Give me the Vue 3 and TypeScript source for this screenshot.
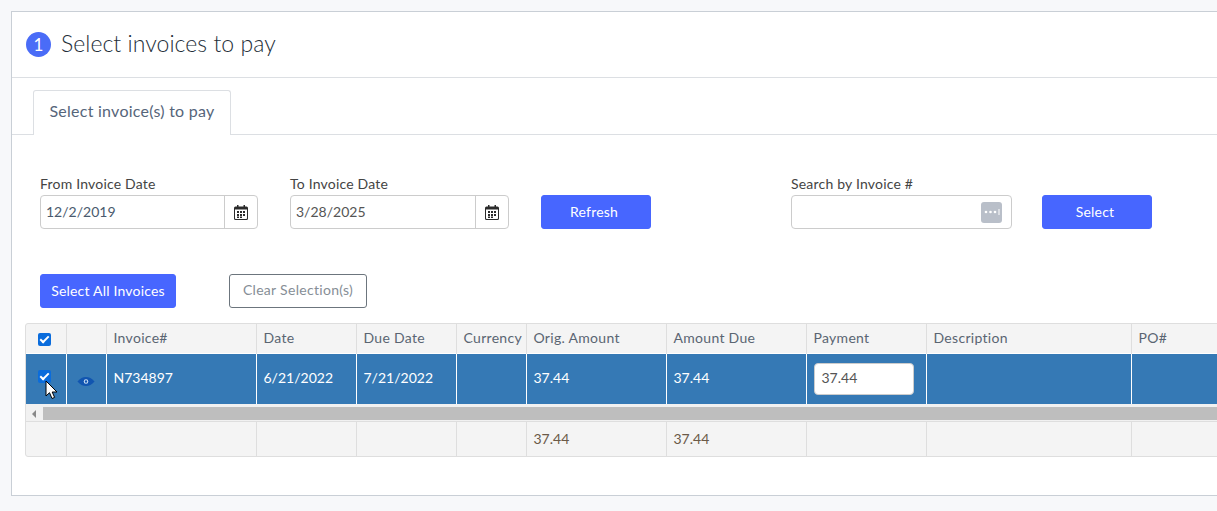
<script setup lang="ts">
const columns = [
  { title: '', width: 40 },
  { title: '', width: 40 },
  { title: 'Invoice#', width: 150 },
  { title: 'Date', width: 100 },
  { title: 'Due Date', width: 100 },
  { title: 'Currency', width: 70 },
  { title: 'Orig. Amount', width: 140 },
  { title: 'Amount Due', width: 140 },
  { title: 'Payment', width: 120 },
  { title: 'Description', width: 205 },
  { title: 'PO#', width: 160 },
]

const row = ['N734897', '6/21/2022', '7/21/2022', '', '37.44', '37.44']
const footer = ['', '', '', '', '37.44', '37.44', '', '', '']
</script>

<template>
  <div class="card">
    <div class="card-head">
      <span class="step">1</span>
      <h1>Select invoices to pay</h1>
    </div>

    <div class="tabs">
      <div class="tab">Select invoice(s) to pay</div>
    </div>

    <div class="filters">
      <div class="field from">
        <label>From Invoice Date</label>
        <div class="input-box">
          <span class="value blue">12/2/2019</span>
          <span class="cal-btn">
            <svg width="14" height="15" viewBox="0 0 14 15">
              <path fill="#2b2b2b" d="M1.5 1.5H3V0h1.5v1.5h5V0H11v1.5h1.5A1.5 1.5 0 0 1 14 3v10.5a1.5 1.5 0 0 1-1.5 1.5h-11A1.5 1.5 0 0 1 0 13.500V3a1.500 1.500 0 0 1 1.500-1.500z" />
              <path fill="#fff" d="M1 4.500h12v8.800a.7.7 0 0 1-.7.7H1.700a.7.7 0 0 1-.7-.7z" />
              <path fill="#2b2b2b" d="M3 6h2v2H3zM6 6h2v2H6zM9 6h2v2H9zM3 9h2v2H3zM6 9h2v2H6zM9 9h2v2H9zM6 11.500h2v1.500H6zM3 11.500h2v1.500H3z" />
            </svg>
          </span>
        </div>
      </div>
      <div class="field to">
        <label>To Invoice Date</label>
        <div class="input-box">
          <span class="value">3/28/2025</span>
          <span class="cal-btn">
            <svg width="14" height="15" viewBox="0 0 14 15">
              <path fill="#2b2b2b" d="M1.5 1.5H3V0h1.5v1.5h5V0H11v1.5h1.5A1.5 1.5 0 0 1 14 3v10.5a1.5 1.5 0 0 1-1.5 1.5h-11A1.5 1.5 0 0 1 0 13.500V3a1.500 1.500 0 0 1 1.500-1.500z" />
              <path fill="#fff" d="M1 4.500h12v8.800a.7.7 0 0 1-.7.7H1.700a.7.7 0 0 1-.7-.7z" />
              <path fill="#2b2b2b" d="M3 6h2v2H3zM6 6h2v2H6zM9 6h2v2H9zM3 9h2v2H3zM6 9h2v2H6zM9 9h2v2H9zM6 11.500h2v1.500H6zM3 11.500h2v1.500H3z" />
            </svg>
          </span>
        </div>
      </div>
      <button class="btn primary refresh">Refresh</button>
      <div class="field search">
        <label>Search by Invoice #</label>
        <div class="input-box">
          <span class="value"></span>
          <span class="dots">
            <svg width="16" height="6" viewBox="0 0 16 6">
              <circle cx="2" cy="3" r="1.300" fill="#fff" />
              <circle cx="6.500" cy="3" r="1.300" fill="#fff" />
              <circle cx="11" cy="3" r="1.300" fill="#fff" />
              <rect x="14.500" y="0" width="1" height="6" fill="#fff" />
            </svg>
          </span>
        </div>
      </div>
      <button class="btn primary select">Select</button>
    </div>

    <div class="actions">
      <button class="btn primary all">Select All Invoices</button>
      <button class="btn outline">Clear Selection(s)</button>
    </div>

    <div class="grid">
      <table>
        <colgroup>
          <col v-for="(c, i) in columns" :key="i" :style="{ width: c.width + 'px' }" />
        </colgroup>
        <thead>
          <tr>
            <th class="center"><span class="check"></span></th>
            <th v-for="c in columns.slice(1)" :key="c.title">{{ c.title }}</th>
          </tr>
        </thead>
        <tbody>
          <tr class="selected">
            <td class="center check-cell">
              <span class="check"></span>
              <svg class="cursor" width="13" height="20" viewBox="0 0 13 20">
                <path fill="#fff" stroke="#000" stroke-width="1" d="M1 1v15l3.500-3.300L7 18.500l2.600-1.100L7.200 12h4.800z" />
              </svg>
            </td>
            <td class="center">
              <svg class="eye" width="18" height="9" viewBox="0 0 19 10">
                <path fill="#1155b0" d="M0 5C3 1.500 6 0 9.500 0S16 1.500 19 5c-3 3.500-6 5-9.500 5S3 8.500 0 5z" />
                <circle cx="9.500" cy="5" r="2.500" fill="#cfe0f5" />
                <circle cx="9.500" cy="5" r="1.300" fill="#1155b0" />
              </svg>
            </td>
            <td v-for="(v, i) in row" :key="i">{{ v }}</td>
            <td class="pay"><span class="pay-input">37.44</span></td>
            <td></td>
            <td></td>
          </tr>
        </tbody>
      </table>
      <div class="scrollbar">
        <span class="arrow"></span>
        <div class="thumb"></div>
      </div>
      <table class="foot">
        <colgroup>
          <col v-for="(c, i) in columns" :key="i" :style="{ width: c.width + 'px' }" />
        </colgroup>
        <tbody>
          <tr>
            <td></td>
            <td></td>
            <td v-for="(v, i) in footer" :key="i">{{ v }}</td>
          </tr>
        </tbody>
      </table>
    </div>
  </div>
</template>

<style>
html,
body {
  margin: 0;
  height: 511px;
  overflow: hidden;
  background: #f7f8fa;
}
</style>

<style scoped>
.card {
  box-sizing: border-box;
  width: 1206px;
  height: 485px;
  margin: 11px 0 0 11px;
  background: #fff;
  border: 1px solid #c9cfd6;
  border-right: none;
  overflow: hidden;
  font-family: Lato, "Open Sans", sans-serif;
  font-size: 14px;
  color: #3f4a56;
}
.card-head {
  display: flex;
  align-items: center;
  height: 65px;
  padding-left: 14px;
  border-bottom: 1px solid #dcdfe3;
}
.step {
  width: 25px;
  height: 25px;
  border-radius: 50%;
  background: #4a6cf7;
  color: #fff;
  font-size: 17px;
  line-height: 25px;
  text-align: center;
}
h1 {
  margin: 0 0 4px 10px;
  font-size: 23px;
  font-weight: 300;
  letter-spacing: 0.05px;
  color: #242e38;
}
.tabs {
  height: 44px;
  margin-top: 12px;
  padding-left: 21px;
  border-bottom: 1px solid #dcdfe3;
}
.tab {
  box-sizing: border-box;
  width: 198px;
  height: 45px;
  background: #fff;
  border: 1px solid #dcdfe3;
  border-bottom: none;
  border-radius: 3px 3px 0 0;
  line-height: 39px;
  text-align: center;
  font-size: 16px;
  letter-spacing: 0.25px;
  color: #56657a;
}
.filters {
  display: flex;
  align-items: flex-end;
  height: 60px;
  margin-top: 34px;
  padding-left: 28px;
}
.field label {
  display: block;
  margin-bottom: 3px;
  line-height: 17px;
  font-size: 14px;
  letter-spacing: 0.2px;
  color: #444;
}
.from {
  width: 218px;
}
.to {
  width: 219px;
  margin-left: 32px;
}
.search {
  width: 221px;
  margin-left: 140px;
}
.input-box {
  box-sizing: border-box;
  display: flex;
  align-items: center;
  height: 34px;
  background: #fff;
  border: 1px solid #ccc;
  border-radius: 4px;
}
.value {
  flex: 1;
  padding: 0 0 2px 5px;
  color: #555;
  font-size: 14px;
}
.value.blue {
  color: #4a5a6e;
}
.cal-btn {
  display: flex;
  align-items: center;
  justify-content: center;
  width: 32px;
  height: 100%;
  border-left: 1px solid #ccc;
}
.dots {
  display: flex;
  align-items: center;
  justify-content: center;
  width: 21px;
  height: 21px;
  margin-right: 9px;
  background: #b9bfc9;
  border-radius: 3px;
}
.btn {
  box-sizing: border-box;
  height: 34px;
  border-radius: 3px;
  font-family: inherit;
  font-size: 14px;
  letter-spacing: 0.2px;
  padding: 0 0 2px;
}
.primary {
  background: #4766ff;
  border: 1px solid #4766ff;
  color: #fff;
}
.refresh {
  width: 110px;
  margin-left: 32px;
  padding-right: 4px;
}
.select {
  width: 110px;
  margin-left: 30px;
  padding-right: 4px;
}
.actions {
  display: flex;
  margin-top: 45px;
  padding-left: 28px;
}
.all {
  width: 136px;
}
.outline {
  width: 138px;
  margin-left: 53px;
  padding-bottom: 3px;
  background: #fff;
  border: 1px solid #6c757d;
  color: #868e96;
  letter-spacing: 0.3px;
}
.grid {
  width: 1300px;
  height: 134px;
  margin: 15px 0 0 13px;
  box-sizing: border-box;
  background: #f4f4f4;
  border: 1px solid #dedede;
  border-radius: 3px;
  overflow: hidden;
}
table {
  table-layout: fixed;
  width: 1265px;
  border-collapse: collapse;
}
th,
td {
  box-sizing: border-box;
  padding: 0 7px;
  border-right: 1px solid #dedede;
  text-align: left;
  font-weight: 400;
  white-space: nowrap;
}
th {
  height: 29px;
  padding-bottom: 1px;
  color: #5a6572;
  font-size: 14px;
  letter-spacing: 0.3px;
}
.center {
  padding: 0;
  text-align: center;
}
.check {
  display: inline-block;
  width: 13px;
  height: 13px;
  margin: 5px 2px 0 0;
  border-radius: 2px;
  background: #0a6cdc;
  position: relative;
}
.check::after {
  content: "";
  position: absolute;
  left: 4px;
  top: 1px;
  width: 3px;
  height: 7px;
  border: solid #fff;
  border-width: 0 2px 2px 0;
  transform: rotate(45deg);
}
.selected td {
  height: 51px;
  padding-bottom: 2px;
  background: #3579b5;
  color: #fff;
  border-right: 1px solid #fff;
  border-top: 1px solid #fff;
  font-size: 14px;
}
.check-cell {
  position: relative;
}
.selected .check-cell .check {
  margin-top: 0;
}
.cursor {
  position: absolute;
  left: 19px;
  top: 26px;
}
.eye {
  vertical-align: middle;
  margin-top: 3px;
}
.selected .pay {
  padding: 0 7px;
}
.pay-input {
  box-sizing: border-box;
  display: block;
  width: 100px;
  height: 32px;
  padding-left: 7px;
  background: #fff;
  border: 1px solid #ccc;
  border-radius: 4px;
  color: #555;
  line-height: 28px;
}
.scrollbar {
  display: flex;
  align-items: center;
  height: 18px;
  padding-top: 2px;
  background: #f1f1f1;
  border-bottom: 1px solid #dedede;
  box-sizing: border-box;
}
.arrow {
  width: 0;
  height: 0;
  margin-left: 6px;
  border: 4px solid transparent;
  border-left: 0;
  border-right: 4px solid #888;
}
.thumb {
  flex: 1;
  height: 13px;
  margin-left: 7px;
  background: #bebebe;
}
.foot td {
  height: 34px;
  padding-bottom: 2px;
  color: #6b5a48;
  font-size: 14px;
}
</style>
